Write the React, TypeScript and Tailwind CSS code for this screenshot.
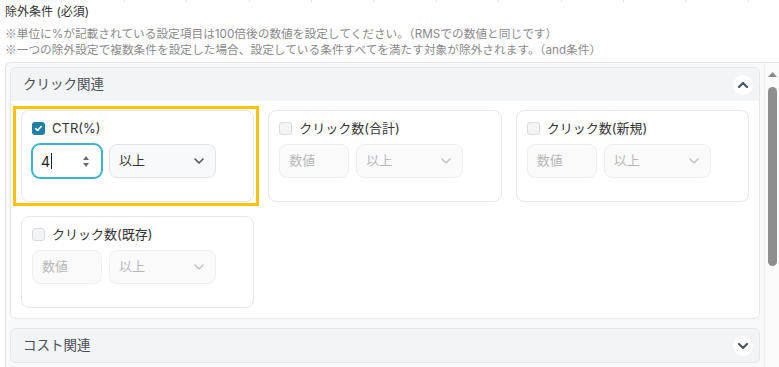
import React from 'react';

type CardProps = {
  label: string;
  checked?: boolean;
  value?: string;
  highlighted?: boolean;
};

const ChevronDown: React.FC<{ className?: string }> = ({ className }) => (
  <svg viewBox="0 0 10 6" className={className} fill="none" stroke="currentColor" strokeWidth="1.6" strokeLinecap="round" strokeLinejoin="round">
    <path d="M1 1l4 4 4-4" />
  </svg>
);

const RoundToggle: React.FC<{ up?: boolean }> = ({ up }) => (
  <span className="flex h-[20px] w-[20px] items-center justify-center rounded-full bg-white text-[#4b5563]">
    <svg viewBox="0 0 10 6" className={up ? 'h-[6px] w-[10px] rotate-180' : 'h-[6px] w-[10px]'} fill="none" stroke="currentColor" strokeWidth="2.2" strokeLinecap="round" strokeLinejoin="round">
      <path d="M1 1l4 4 4-4" />
    </svg>
  </span>
);

const ConditionCard: React.FC<CardProps> = ({ label, checked = false, value, highlighted = false }) => {
  return (
    <div className="relative">
      {highlighted && (
        <div className="pointer-events-none absolute -top-[4px] -right-[5px] -bottom-[4px] -left-[8px] border-[3px] border-[#ffc107]" />
      )}
      <div className="h-[92px] rounded-lg border border-[#e5e7eb] bg-white px-[10px] pt-[11px]">
        <div className="flex h-[13px] items-center">
          {checked ? (
            <span className="flex h-[13px] w-[13px] items-center justify-center rounded-[3px] bg-[#1f7fa6]">
              <svg viewBox="0 0 10 10" className="h-[9px] w-[9px]" fill="none" stroke="white" strokeWidth="1.8" strokeLinecap="round" strokeLinejoin="round">
                <path d="M2 5.2l2 2 4-4.4" />
              </svg>
            </span>
          ) : (
            <span className="h-[13px] w-[13px] rounded-[3px] border border-[#d9dbe0] bg-[#f3f4f6]" />
          )}
          <span className="ml-[7px] text-[13px] leading-none text-[#333]">{label}</span>
        </div>
        <div className="mt-[9px] flex gap-[7px]">
          {checked ? (
            <div className="flex h-[34px] w-[70px] items-center justify-between rounded-lg border border-[#36b4d1] bg-white pl-[8px] pr-[12px] ring-1 ring-[#36b4d1]">
              <span className="flex items-center text-[14px] text-[#222]">
                {value}
                <span className="ml-[1px] h-[16px] w-px bg-[#222]" />
              </span>
              <span className="flex flex-col gap-[3px] text-[#6b6b6b]">
                <svg viewBox="0 0 6 4" className="h-[4px] w-[6px]" fill="currentColor"><path d="M3 0l3 4H0z" /></svg>
                <svg viewBox="0 0 6 4" className="h-[4px] w-[6px]" fill="currentColor"><path d="M0 0h6L3 4z" /></svg>
              </span>
            </div>
          ) : (
            <div className="flex h-[34px] w-[70px] items-center rounded-lg border border-[#efefef] bg-[#fafafa] px-[9px] text-[13px] text-[#b8b8b8]">
              数値
            </div>
          )}
          <div
            className={
              checked
                ? 'flex h-[34px] w-[107px] items-center justify-between rounded-lg border border-[#e2e4e8] bg-[#f8f9fa] pl-[9px] pr-[11px] text-[13px] text-[#333]'
                : 'flex h-[34px] w-[107px] items-center justify-between rounded-lg border border-[#efefef] bg-[#fafafa] pl-[9px] pr-[11px] text-[13px] text-[#b8b8b8]'
            }
          >
            以上
            <ChevronDown className={checked ? 'h-[6px] w-[10px] text-[#555]' : 'h-[6px] w-[10px] text-[#c4c4c4]'} />
          </div>
        </div>
      </div>
    </div>
  );
};

const Mark = () => <span className="font-['Noto_Sans_CJK_JP',sans-serif] leading-4">※</span>;

export default function App() {
  const ticks = Array.from({ length: 12 }, (_, i) => i);

  return (
    <div className="h-[367px] w-[779px] overflow-hidden bg-white font-['Inter','Noto_Sans_CJK_JP',sans-serif]">
      <div className="flex h-[2px]">
        {ticks.map((t) => (
          <div key={t} className="h-[2px] w-[62.4px] border-r border-[#e6e6e6]" />
        ))}
      </div>

      <div className="mt-[2px] h-4 pl-[5px] text-[12px] leading-4 text-[#333]">除外条件 (必須)</div>
      <div className="mt-[5px] pl-[5px] text-[11.7px] leading-4 text-[#8a8a8a]">
        <p className="h-4"><Mark />単位に%が記載されている設定項目は100倍後の数値を設定してください。（RMSでの数値と同じです）</p>
        <p className="h-4"><Mark />一つの除外設定で複数条件を設定した場合、設定している条件すべてを満たす対象が除外されます。（and条件）</p>
      </div>

      <div className="ml-[5px] mt-[5px] flex h-[320px] rounded-tl-md border-l border-t border-[#e3e5e8] bg-[#f8f9fa]">
        <div className="flex-1 overflow-hidden px-[4px] pt-[4px]">
          <section className="rounded-md border border-[#e5e7eb] bg-white">
            <header className="flex h-[33px] items-center justify-between rounded-t-md bg-[#f3f4f6] pl-[12px] pr-[6px]">
              <span className="text-[13.5px] text-[#4b4f56]">クリック関連</span>
              <RoundToggle up />
            </header>
            <div className="grid grid-cols-3 gap-[14px] px-[10px] pb-[10px] pt-[9px]">
              <ConditionCard label="CTR(%)" checked value="4" highlighted />
              <ConditionCard label="クリック数(合計)" />
              <ConditionCard label="クリック数(新規)" />
              <ConditionCard label="クリック数(既存)" />
            </div>
          </section>

          <section className="mt-[9px] rounded-md border border-[#e5e7eb] bg-[#f3f4f6]">
            <header className="flex h-[33px] items-center justify-between pl-[12px] pr-[6px]">
              <span className="text-[13.5px] text-[#4b4f56]">コスト関連</span>
              <RoundToggle />
            </header>
          </section>
        </div>

        <div className="flex w-[15px] flex-col items-center border-l border-[#f0f0f0] bg-[#fafafa] pt-[9px]">
          <svg viewBox="0 0 9 5" className="h-[5px] w-[9px]" fill="#8a8a8a"><path d="M4.5 0L9 5H0z" /></svg>
          <div className="mt-[10px] h-[179px] w-[9px] rounded-full bg-[#8e8e8e]" />
        </div>
      </div>
    </div>
  );
}
